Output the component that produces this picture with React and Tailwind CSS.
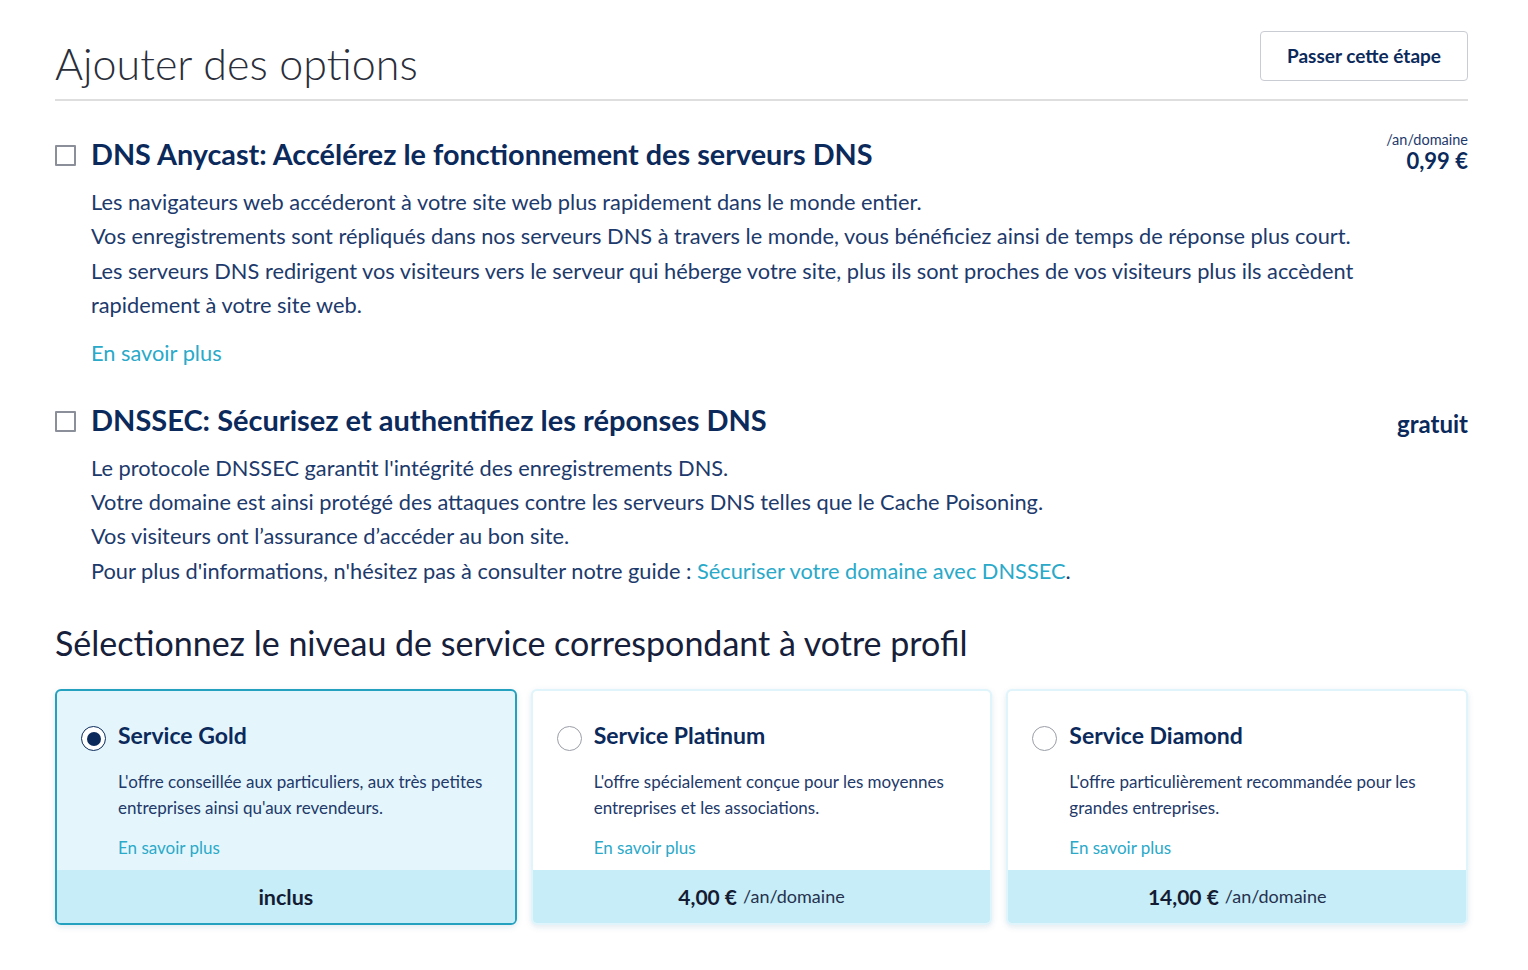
import React from "react";

function Checkbox() {
  return <div className="w-[21px] h-[21px] border-2 border-[#8a8f99] bg-white shrink-0 rounded-[1px]" />;
}

function Radio({ checked }) {
  return (
    <div className={"w-[25px] h-[25px] mt-[6px] rounded-full border-[1.5px] flex items-center justify-center shrink-0 bg-white " + (checked ? "border-[#0b2a5b]" : "border-[#9a9ea6]")}>
      {checked && <div className="w-[14px] h-[14px] rounded-full bg-[#0b2a5b]" />}
    </div>
  );
}

function Card({ title, desc, selected, footer }) {
  return (
    <div className={"flex-1 h-[236px] flex flex-col rounded-[6px] overflow-hidden shadow-[0_2px_6px_rgba(0,80,120,0.12)] " + (selected ? "border-2 border-[#23a1bf] bg-[#e4f6fc]" : "border-2 border-[#dff4fb] bg-white")}>
      <div className="flex-1 px-[24px] pt-[29px]">
        <div className="flex items-start gap-[12px]">
          <Radio checked={selected} />
          <div className="text-[23px] font-bold text-[#0b2a5b] leading-[30px]">{title}</div>
        </div>
        <div className="pl-[37px] mt-[18px] text-[17px] leading-[26px] text-[#22396a]">{desc}</div>
        <div className="pl-[37px] mt-[14px] text-[17px] leading-[26px] text-[#2aa9c9]">En savoir plus</div>
      </div>
      <div className="h-[53px] shrink-0 bg-[#c6edf8] flex items-center justify-center text-[#141c33]">{footer}</div>
    </div>
  );
}

export default function App() {
  return (
    <div className="bg-white min-h-screen pl-[55px] pr-[60px] pt-[31px] font-['Lato',sans-serif] text-[#0b2a5b]">
      <div className="flex justify-between items-start h-[70px] border-b-2 border-[#dedede]">
        <h1 className="text-[43px] font-light leading-[56px] mt-[5px] text-[#2a2e3a]">Ajouter des options</h1>
        <button className="h-[50px] w-[208px] border border-[#c9ccd2] rounded-[4px] text-[19px] font-bold text-[#0b2a5b] bg-white">Passer cette étape</button>
      </div>

      <div className="flex mt-[34px]">
        <div className="pt-[10px]"><Checkbox /></div>
        <div className="ml-[15px] flex-1">
          <div className="text-[28.8px] font-bold leading-[38px]">DNS Anycast: Accélérez le fonctionnement des serveurs DNS</div>
          <div className="mt-[12px] text-[21.8px] leading-[34.4px] text-[#1d3a6c] max-w-[1272px]">
            <p>Les navigateurs web accéderont à votre site web plus rapidement dans le monde entier.</p>
            <p>Vos enregistrements sont répliqués dans nos serveurs DNS à travers le monde, vous bénéficiez ainsi de temps de réponse plus court.</p>
            <p>Les serveurs DNS redirigent vos visiteurs vers le serveur qui héberge votre site, plus ils sont proches de vos visiteurs plus ils accèdent rapidement à votre site web.</p>
          </div>
          <div className="mt-[13px] text-[21.8px] leading-[34px] text-[#2aa9c9]">En savoir plus</div>
        </div>
        <div className="text-right -mt-[3px]">
          <div className="text-[14.5px] leading-[16px] text-[#1d3a6c]">/an/domaine</div>
          <div className="text-[22px] font-bold leading-[26px]">0,99 €</div>
        </div>
      </div>

      <div className="flex mt-[31px]">
        <div className="pt-[10px]"><Checkbox /></div>
        <div className="ml-[15px] flex-1">
          <div className="text-[29px] font-bold leading-[38px]">DNSSEC: Sécurisez et authentifiez les réponses DNS</div>
          <div className="mt-[12px] text-[21.8px] leading-[34.4px] text-[#1d3a6c]">
            <p>Le protocole DNSSEC garantit l'intégrité des enregistrements DNS.</p>
            <p>Votre domaine est ainsi protégé des attaques contre les serveurs DNS telles que le Cache Poisoning.</p>
            <p>Vos visiteurs ont l’assurance d’accéder au bon site.</p>
            <p>Pour plus d'informations, n'hésitez pas à consulter notre guide : <span className="text-[#2aa9c9]">Sécuriser votre domaine avec DNSSEC</span>.</p>
          </div>
        </div>
        <div className="text-[24px] font-bold leading-[30px] pt-[8px]">gratuit</div>
      </div>

      <h2 className="mt-[33px] text-[34px] leading-[44px] text-[#16203a]">Sélectionnez le niveau de service correspondant à votre profil</h2>

      <div className="flex gap-[14px] mt-[24px]">
        <Card selected title="Service Gold" desc={<>L'offre conseillée aux particuliers, aux très petites entreprises ainsi qu'aux revendeurs.</>} footer={<span className="text-[21.5px] font-bold">inclus</span>} />
        <Card title="Service Platinum" desc={<>L'offre spécialement conçue pour les moyennes entreprises et les associations.</>} footer={<><span className="text-[21px] font-bold">4,00 €</span><span className="text-[18px] ml-[6px] text-[#26324d]">/an/domaine</span></>} />
        <Card title="Service Diamond" desc={<>L'offre particulièrement recommandée pour les grandes entreprises.</>} footer={<><span className="text-[21px] font-bold">14,00 €</span><span className="text-[18px] ml-[6px] text-[#26324d]">/an/domaine</span></>} />
      </div>
    </div>
  );
}
